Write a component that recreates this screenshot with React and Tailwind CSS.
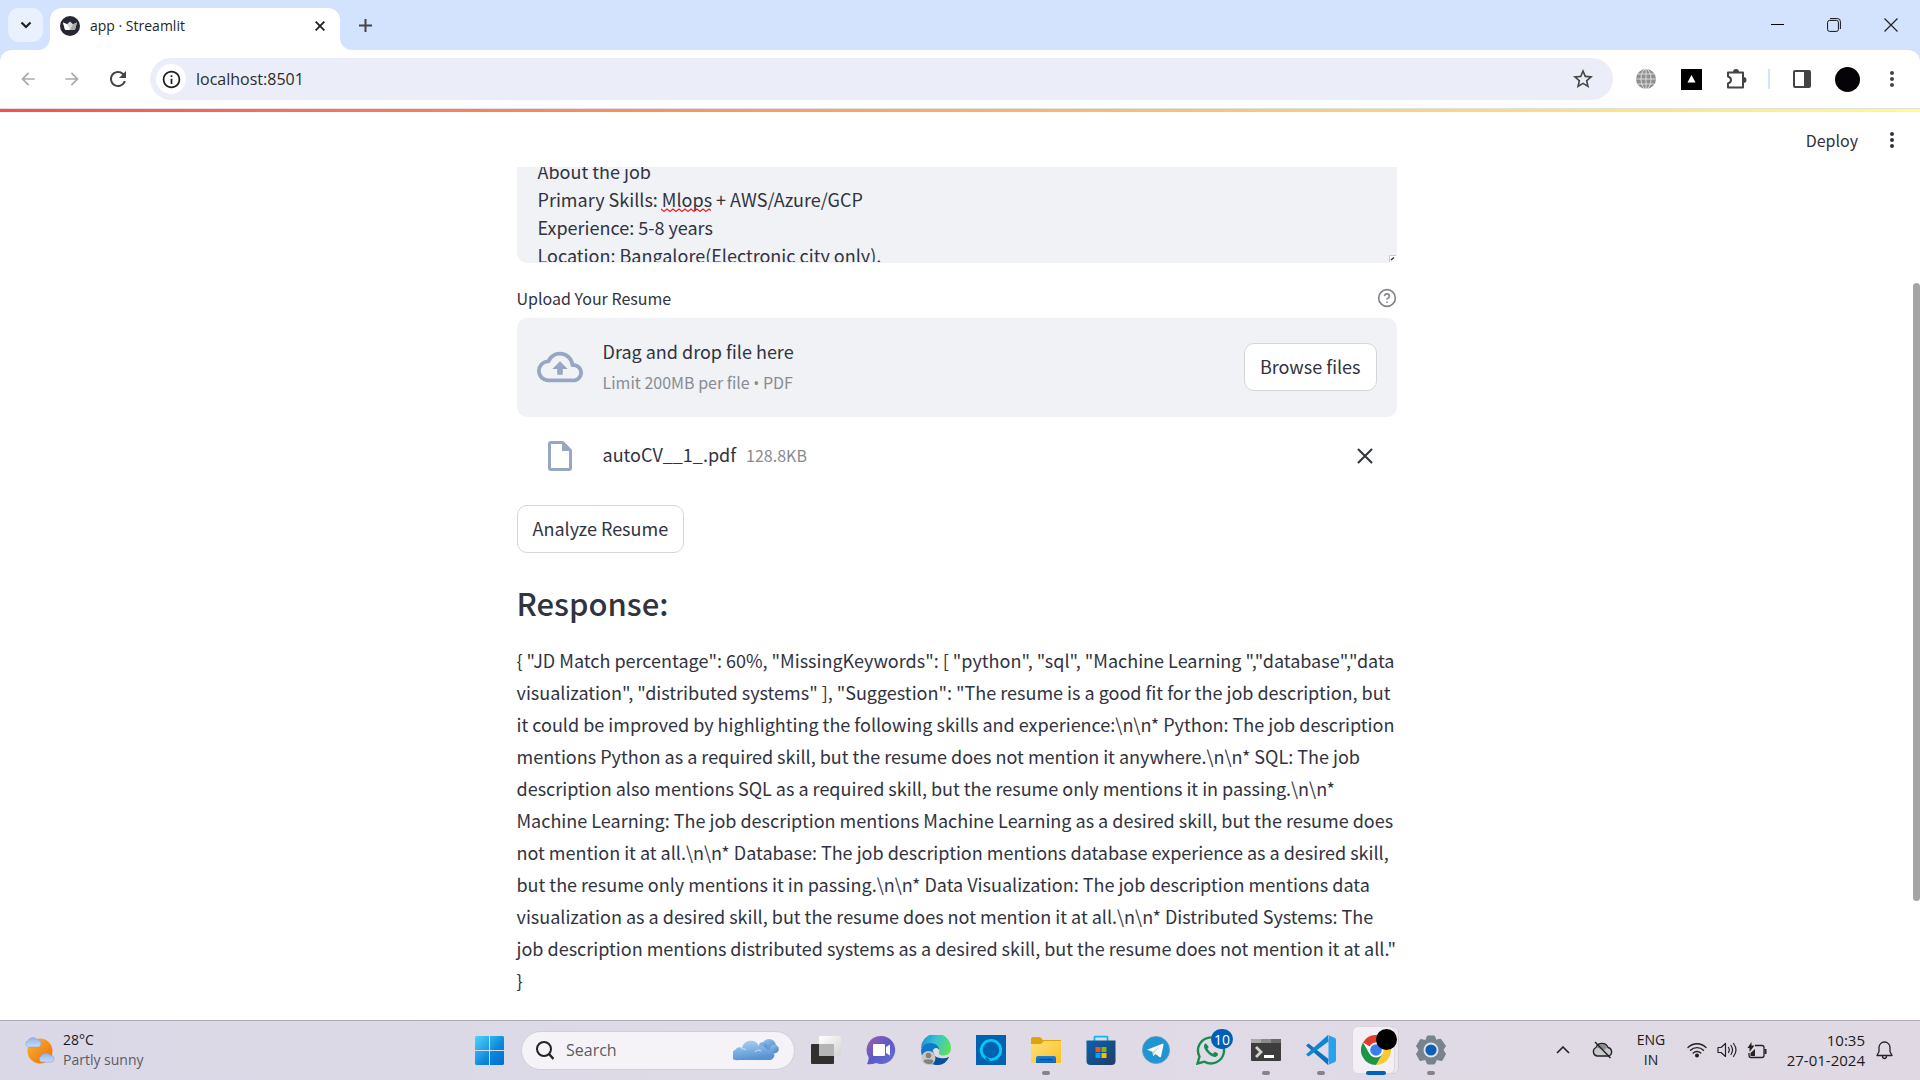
import React from "react";
import {
  MdOutlineCloudUpload,
  MdStarBorder,
  MdRefresh,
  MdArrowBack,
  MdArrowForward,
  MdOutlineInfo,
  MdMoreVert,
} from "react-icons/md";
import { CircleHelp } from "lucide-react";

const responseLines = [
  '{ "JD Match percentage": 60%, "MissingKeywords": [ "python", "sql", "Machine Learning ","database","data',
  'visualization", "distributed systems" ], "Suggestion": "The resume is a good fit for the job description, but',
  "it could be improved by highlighting the following skills and experience:\\n\\n* Python: The job description",
  "mentions Python as a required skill, but the resume does not mention it anywhere.\\n\\n* SQL: The job",
  "description also mentions SQL as a required skill, but the resume only mentions it in passing.\\n\\n*",
  "Machine Learning: The job description mentions Machine Learning as a desired skill, but the resume does",
  "not mention it at all.\\n\\n* Database: The job description mentions database experience as a desired skill,",
  "but the resume only mentions it in passing.\\n\\n* Data Visualization: The job description mentions data",
  "visualization as a desired skill, but the resume does not mention it at all.\\n\\n* Distributed Systems: The",
  'job description mentions distributed systems as a desired skill, but the resume does not mention it at all."',
  "}",
];

const jobText =
  "About the job\nPrimary Skills: Mlops + AWS/Azure/GCP\nExperience: 5-8 years\nLocation: Bangalore(Electronic city only).";

function StreamlitIcon() {
  return (
    <svg viewBox="0 0 20 20" className="size-5 shrink-0">
      <circle cx="10" cy="10" r="10" fill="#262730" />
      <path d="M3 6.500 7 8.200 10 5.500 13 8.200 17 6.500 15.200 13Q14.900 14 14 14H6Q5.100 14 4.800 13Z" fill="#d8d8d8" />
      <path d="M3 6.500 7 8.200 10 14H6Q5.100 14 4.800 13Z" fill="#fff" />
      <path d="M17 6.500 13 8.200 10 14H14Q14.900 14 15.200 13Z" fill="#a9a9a9" />
    </svg>
  );
}

function TabStrip() {
  return (
    <header className="flex h-[50px] items-end bg-[#d3e3fd]">
      <button aria-label="Search tabs" className="mb-2 ml-2 flex h-[34px] w-[35px] items-center justify-center rounded-[11px] bg-[#e9f1fe]">
        <svg viewBox="0 0 12 8" className="h-2 w-3" fill="none" stroke="#1f1f1f" strokeWidth="2.200">
          <path d="M1.500 1.500 6 6 10.500 1.500" />
        </svg>
      </button>
      <div className="relative ml-[7px] flex h-[42px] w-[290px] items-center rounded-t-xl bg-white pr-3 pb-[7px] pl-[10px]">
        <svg viewBox="0 0 12 12" className="absolute bottom-0 -left-3 size-3">
          <path d="M12 0V12H0A12 12 0 0 0 12 0Z" fill="#fff" />
        </svg>
        <svg viewBox="0 0 12 12" className="absolute -right-3 bottom-0 size-3">
          <path d="M0 0V12H12A12 12 0 0 1 0 0Z" fill="#fff" />
        </svg>
        <StreamlitIcon />
        <span className="ml-[10px] flex-1 text-[14px] text-[#1f1f1f]">app · Streamlit</span>
        <button aria-label="Close tab" className="flex size-4 items-center justify-center">
          <svg viewBox="0 0 10 10" className="size-[10px]" stroke="#1f1f1f" strokeWidth="1.8">
            <path d="M.6.6 9.4 9.4M9.4.6.6 9.4" />
          </svg>
        </button>
      </div>
      <button aria-label="New tab" className="mb-[18px] ml-[19px]">
        <svg viewBox="0 0 13 13" className="size-[13px]" stroke="#444" strokeWidth="2">
          <path d="M6.5 0V13M0 6.5H13" />
        </svg>
      </button>
      <div className="mb-[18px] ml-auto flex items-center gap-[43px] pr-[22px]">
        <button aria-label="Minimize">
          <svg viewBox="0 0 14 14" className="size-[14px]" stroke="#000">
            <path d="M1 6.500H14" />
          </svg>
        </button>
        <button aria-label="Restore">
          <svg viewBox="0 0 14 14" className="size-[14px]" fill="none" stroke="#111">
            <rect x=".6" y="2.4" width="10.8" height="11" rx="2" />
            <path d="M3 .6H10.5Q13.4 .6 13.4 3.5V11" />
          </svg>
        </button>
        <button aria-label="Close">
          <svg viewBox="0 0 14 14" className="size-[14px]" stroke="#222" strokeWidth="1.2">
            <path d="M.5.5 13.5 13.5M13.5.5.5 13.5" />
          </svg>
        </button>
      </div>
    </header>
  );
}

function Toolbar() {
  return (
    <div className="bg-[#d3e3fd]">
      <div className="flex h-[59px] items-center rounded-t-xl border-b border-[#dde1e8] bg-white">
        <div className="flex w-[150px] shrink-0 items-center gap-6 pl-[18px] text-[#aaa]">
          <button aria-label="Back"><MdArrowBack className="size-5" /></button>
          <button aria-label="Forward"><MdArrowForward className="size-5" /></button>
          <button aria-label="Reload"><MdRefresh className="size-6 text-[#444]" /></button>
        </div>
        <div className="flex h-[42px] flex-1 items-center rounded-full bg-[#ebeef8] px-[6px]">
          <button aria-label="Site information" className="flex size-[30px] items-center justify-center rounded-full bg-white text-[#1f1f1f]">
            <MdOutlineInfo className="size-[21px]" />
          </button>
          <input
            aria-label="Address"
            defaultValue="localhost:8501"
            className="ml-[10px] flex-1 bg-transparent text-[16px] text-[#2b2b2b] outline-none"
          />
          <button aria-label="Bookmark" className="pr-3 text-[#444]"><MdStarBorder className="size-6" /></button>
        </div>
        <div className="flex items-center pl-[23px] text-[#444]">
          <button aria-label="Web extension">
            <svg viewBox="0 0 20 20" className="size-5">
              <circle cx="10" cy="10" r="10" fill="#8f8f8f" />
              <g fill="none" stroke="#e4e4e4" strokeWidth=".9">
                <ellipse cx="10" cy="10" rx="5" ry="10" />
                <path d="M10 0V20M0 10H20M1.5 5H18.500M1.500 15H18.500" />
              </g>
            </svg>
          </button>
          <button aria-label="Triangle extension" className="ml-[25px]">
            <svg viewBox="0 0 21 21" className="size-[21px]">
              <path d="M0 0H21V21H0Z" fill="#000" />
              <path d="M10.500 6 14.500 13.500H6.500Z" fill="#fff" />
            </svg>
          </button>
          <button aria-label="Extensions" className="ml-[24px]">
            <svg viewBox="0 0 22 22" className="size-[22px]">
              <path d="M2 3.500H17V18.500H2V14.500Q5 13.600 5 11T2 7.500Z" transform="translate(0 1)" fill="none" stroke="#444" strokeWidth="2" strokeLinejoin="round" />
              <path d="M7 4A3 3 0 0 1 13 4ZM17.500 9A3 3 0 0 1 17.500 15Z" fill="#444" />
            </svg>
          </button>
          <span className="ml-[20px] h-5 w-[2px] bg-[#d3e3fd]" />
          <button aria-label="Side panel" className="ml-[23px]">
            <svg viewBox="0 0 18 18" className="size-[18px]">
              <rect x="1" y="1" width="16" height="16" rx="1" fill="none" stroke="#444" strokeWidth="2" />
              <path d="M11 1H17V17H11Z" fill="#444" />
            </svg>
          </button>
          <button aria-label="Profile" className="ml-6 size-[25px] rounded-full bg-[#050308]" />
          <button aria-label="Chrome menu" className="mr-4 ml-[20px]"><MdMoreVert className="size-6" /></button>
        </div>
      </div>
    </div>
  );
}

function Resume() {
  return (
    <main className="flex-1 overflow-hidden">
      <div className="mx-auto w-full max-w-[880px]">
        <div className="relative h-24 overflow-hidden rounded-b-[10px] bg-[#f0f2f6]">
          <textarea
            aria-label="Job description"
            spellCheck={false}
            defaultValue={jobText}
            className="-mt-[10px] block h-[105px] w-full resize-none overflow-hidden px-[21px] text-[18px] leading-7 outline-none"
          />
          <svg viewBox="0 0 50 4" className="absolute top-[41px] left-[144px] h-1 w-[50px]" fill="none" stroke="#f01818" strokeWidth="1.2">
            <path d="M0 1 3 3.400 6 1 9 3.400 12 1 15 3.400 18 1 21 3.400 24 1 27 3.400 30 1 33 3.400 36 1 39 3.400 42 1 45 3.400 48 1 50 2.500" />
          </svg>
          <svg viewBox="0 0 7 7" className="absolute right-px bottom-px size-[7px]">
            <path d="M0 0H7V4L4 7H0Z" fill="#fff" />
            <path d="M.5 7V.5H7" fill="none" stroke="#ccc" />
            <path d="M2 5 5 2.500" stroke="#333" strokeWidth="1.500" />
          </svg>
        </div>

        <div className="mt-[23px] flex h-6 items-center justify-between">
          <label htmlFor="resume" className="text-[16px] leading-6">Upload Your Resume</label>
          <button aria-label="Help" className="text-[#84858c]"><CircleHelp className="size-5" /></button>
        </div>

        <section className="mt-2 flex h-[99px] items-center rounded-[10px] bg-[#f0f2f6] px-5 pb-[2px]">
          <MdOutlineCloudUpload className="size-[46px] text-[#97a6c3]" />
          <div className="ml-5 flex-1">
            <p className="text-[18px] leading-8">Drag and drop file here</p>
            <p className="text-[16px] leading-[30px] text-[#8a8b91]">
              Limit 200MB per file <span className="font-['Open_Sans',sans-serif]">•</span> PDF
            </p>
          </div>
          <input id="resume" type="file" className="sr-only" />
          <button className="h-12 rounded-[10px] border border-[#d6d6d9] bg-white px-[15px] text-[18px]">Browse files</button>
        </section>

        <div className="mt-[19px] flex h-10 items-center pr-6 pl-[31px]">
          <svg viewBox="0 0 24 30" className="h-[30px] w-6">
            <path d="M3 1.500H14.500L22.500 9.500V27Q22.500 28.500 21 28.500H3Q1.500 28.500 1.500 27V3Q1.500 1.500 3 1.500Z" fill="none" stroke="#97a6c3" strokeWidth="3" />
            <path d="M14 1H16L23 8V10H14Z" fill="#97a6c3" />
          </svg>
          <span className="ml-[31px] pb-1 text-[18px]">autoCV__1_.pdf</span>
          <span className="ml-[10px] pb-[2px] text-[16px] text-[#8a8b91]">128.8KB</span>
          <button aria-label="Remove file" className="ml-auto">
            <svg viewBox="0 0 16 16" className="size-4" stroke="#31333f" strokeWidth="2" strokeLinecap="round">
              <path d="M1.500 1.500 14.500 14.500M14.500 1.500 1.500 14.500" />
            </svg>
          </button>
        </div>

        <button className="mt-[29px] h-12 rounded-[10px] border border-[#d6d6d9] px-[15px] pb-[2px] text-[18px]">Analyze Resume</button>
        <h2 className="mt-[26px] text-[31px] leading-[48px] font-medium">Response:</h2>
        <p className="mt-[17px] text-[18px] leading-8 whitespace-pre">{responseLines.join("\n")}</p>
      </div>
    </main>
  );
}

function Weather() {
  return (
    <svg viewBox="0 0 32 30" className="h-[30px] w-8">
      <defs>
        <linearGradient id="sun" x1="0" y1="0" x2="1" y2="1"><stop stopColor="#f8b62c" /><stop offset="1" stopColor="#f06a0c" /></linearGradient>
        <linearGradient id="wcloud" x1="0" y1="0" x2="0" y2="1"><stop stopColor="#8fb2ea" /><stop offset="1" stopColor="#c9dcf8" /></linearGradient>
      </defs>
      <circle cx="16" cy="16" r="12.500" fill="url(#sun)" />
      <path d="M4 12A3.500 3.500 0 0 1 4 5.500 5.500 5.500 0 0 1 13 4.500 4 4 0 0 1 15 12Z" fill="url(#wcloud)" stroke="#7fa3e0" strokeWidth=".6" />
      <path d="M17 27A3.500 3.500 0 0 1 17 21 5.500 5.500 0 0 1 26 20 3.700 3.700 0 0 1 28 27Z" fill="url(#wcloud)" stroke="#7fa3e0" strokeWidth=".6" />
    </svg>
  );
}

function StartIcon() {
  return (
    <svg viewBox="0 0 29 29" className="size-[29px]">
      <defs><linearGradient id="win" x1="0" y1="0" x2="1" y2="1"><stop stopColor="#4fd3fb" /><stop offset=".6" stopColor="#0c86dc" /><stop offset="1" stopColor="#006fd0" /></linearGradient></defs>
      <path d="M1 0H14V14H0V1ZM15 0H28L29 1V14H15ZM0 15H14V29H1L0 28ZM15 15H29V28L28 29H15Z" fill="url(#win)" />
    </svg>
  );
}

function SearchClouds() {
  return (
    <svg viewBox="0 0 46 22" className="h-[22px] w-[46px]">
      <defs>
        <linearGradient id="sc" x1="0" y1="0" x2=".3" y2="1"><stop stopColor="#b2d5f6" /><stop offset="1" stopColor="#5593d2" /></linearGradient>
        <linearGradient id="sc2" x1="0" y1="0" x2=".6" y2="1"><stop stopColor="#9cc6ef" /><stop offset="1" stopColor="#4c88c9" /></linearGradient>
      </defs>
      <circle cx="36" cy="7" r="7" fill="url(#sc2)" />
      <circle cx="41.500" cy="10" r="4.300" fill="url(#sc2)" />
      <circle cx="30" cy="7" r="4" fill="url(#sc2)" />
      <path d="M5 21A5 5 0 0 1 2 11 5 5 0 0 1 9 9 9 9 0 0 1 26 7 6 6 0 0 1 34 11 5 5 0 0 1 38 21Z" fill="url(#sc)" />
      <path d="M22 13A4 4 0 0 1 28 12M13 11A5 5 0 0 0 8 10" stroke="#b4d6f7" strokeWidth="1.200" fill="none" />
    </svg>
  );
}

const apps = [
  {
    name: "Task view",
    icon: (
      <svg viewBox="0 0 30 30" className="size-[30px]">
        <defs><linearGradient id="tv" x1="0" y1="0" x2="1" y2="1"><stop stopColor="#fff" /><stop offset="1" stopColor="#d5d5d5" /></linearGradient></defs>
        <rect y="9" width="23" height="20" rx="1" fill="#30302e" />
        <rect x="8" y="1" width="22" height="20" rx="1" fill="url(#tv)" />
        <path d="M8 9H23V21H8Z" fill="#b4b5b4" />
      </svg>
    ),
  },
  {
    name: "Chat",
    icon: (
      <svg viewBox="0 0 30 30" className="size-[30px]">
        <defs><linearGradient id="teams" x1="0" y1="0" x2="1" y2="1"><stop stopColor="#a45ca5" /><stop offset=".5" stopColor="#5b5ac8" /><stop offset="1" stopColor="#6672d8" /></linearGradient></defs>
        <path d="M15 1A14 14 0 1 1 10 28Q5 30 1 29 3 26 2.500 22A14 14 0 0 1 15 1Z" fill="url(#teams)" />
        <rect x="7" y="9" width="12" height="12" rx="1" fill="#fff" />
        <path d="M20 12 24 9.500V20.500L20 18Z" fill="#fff" />
      </svg>
    ),
  },
  {
    name: "Edge",
    icon: (
      <svg viewBox="0 0 30 30" className="size-[30px]">
        <defs>
          <linearGradient id="edgeTop" x1="0" y1=".3" x2="1" y2=".6"><stop stopColor="#1c91d5" /><stop offset=".45" stopColor="#35c4d6" /><stop offset="1" stopColor="#63df55" /></linearGradient>
        </defs>
        <path d="M0 14A15 15 0 0 1 30 13Q30 20 23 20.500 17 20.500 18 17C20 12 12 7 6 9Q2 10 0 14Z" fill="url(#edgeTop)" />
        <path d="M0 15Q2 8 9 8C16 8 19 13 18 15 15 10 9 16 12 21 16 28 23 26 28 22 24 29 17 31 12 29.500 4 28 0 22 0 15Z" fill="#0f78c8" />
        <path d="M12 15Q12 22 19 23 24 24 28 22 24 31 14 30 9 24 12 15Z" fill="#0d4f9b" />
        <circle cx="7.500" cy="23" r="7" fill="#cac7c5" />
        <circle cx="7.500" cy="20.500" r="2.800" fill="#85817f" />
        <path d="M2.500 26.500Q2.500 24.500 5 24.500H10Q12.500 24.500 12.500 26.500 10 30 7.500 29 5 29 2.500 26.500Z" fill="#85817f" />
      </svg>
    ),
  },
  {
    name: "Alexa",
    icon: (
      <svg viewBox="0 0 30 30" className="size-[30px]">
        <path d="M0 0H30V30H0Z" fill="#0063b1" />
        <circle cx="15" cy="15" r="9.700" fill="none" stroke="#06c8f8" strokeWidth="2.800" />
        <path d="M9 22.500Q13 22 14 26L10.500 25Z" fill="#0063b1" />
      </svg>
    ),
  },
  {
    name: "File Explorer",
    running: true,
    icon: (
      <svg viewBox="0 0 30 30" className="size-[30px]">
        <defs>
          <linearGradient id="fold" x1="0" y1="0" x2="1" y2="1"><stop stopColor="#ffe07c" /><stop offset="1" stopColor="#fdc020" /></linearGradient>
          <linearGradient id="foldb" x1="0" y1="0" x2="0" y2="1"><stop stopColor="#1a80d4" /><stop offset="1" stopColor="#0d66bc" /></linearGradient>
        </defs>
        <path d="M0 4Q0 2 2 2H9L12 5H29Q30 5 30 6V14H0Z" fill="#e0a10a" />
        <path d="M0 9H10L13 6H29Q30 6 30 7V28H1L0 27Z" fill="url(#fold)" />
        <path d="M5 28V23Q5 21 7 21H23Q25 21 25 23V28Z" fill="url(#foldb)" />
        <path d="M8.500 24.500H21.500" stroke="#0a4c91" strokeWidth="1.200" />
      </svg>
    ),
  },
  {
    name: "Microsoft Store",
    icon: (
      <svg viewBox="0 0 30 30" className="size-[30px]">
        <defs><linearGradient id="store" x1="0" y1="0" x2="1" y2="1"><stop stopColor="#0864ac" /><stop offset="1" stopColor="#233a68" /></linearGradient></defs>
        <path d="M8.500 8V2.200Q8.500 1.700 9 1.700H21Q21.500 1.700 21.500 2.200V8" fill="none" stroke="#18b4ee" strokeWidth="1.800" />
        <path d="M.5 5.500H29.500V26Q29.500 30 25.500 30H4.500Q.5 30 .5 26Z" fill="url(#store)" />
        <path d="M9.500 12H14.500V17H9.500Z" fill="#f25022" />
        <path d="M15.500 12H20.500V17H15.500Z" fill="#7fba00" />
        <path d="M9.500 18H14.500V23H9.500Z" fill="#00a4ef" />
        <path d="M15.500 18H20.500V23H15.500Z" fill="#ffb900" />
      </svg>
    ),
  },
  {
    name: "Telegram",
    icon: (
      <svg viewBox="0 0 28 28" className="size-7">
        <circle cx="14" cy="14" r="13.600" fill="#1f95d4" stroke="#6b9fc0" strokeWidth=".8" />
        <path d="M5 13.800 20.500 7.700Q21.800 7.300 21.500 8.800L19 20.500Q18.700 21.700 17.500 21L13.500 18 11.500 20Q11 20.300 11 19.500L10.500 15.800Z" fill="#fff" />
        <path d="M10.500 15.800 18 10.500 12.200 16.500 11.500 20Z" fill="#b9d8ec" />
      </svg>
    ),
  },
  {
    name: "WhatsApp",
    badge: "10",
    icon: (
      <svg viewBox="0 0 30 30" className="size-[30px]">
        <path d="M1.500 28.500 3.500 21.500A13 13 0 1 1 8.500 26.700Z" fill="none" stroke="#198a50" strokeWidth="2.400" />
        <path d="M10 8.500Q9 8.300 8.200 9.800 7.200 13 11 17.300 16 22.800 20 21.700 22.300 20.800 22 18.500L18.800 16.800 17 18.700Q13.200 17 11.500 13.700L12.700 12Z" fill="#198a50" />
      </svg>
    ),
  },
  {
    name: "Terminal",
    running: true,
    icon: (
      <svg viewBox="0 0 30 24" className="h-6 w-[30px]">
        <rect y="1" width="30" height="22" rx="1" fill="#3d3d3d" />
        <path d="M0 2Q0 1 1 1H10V5H0Z" fill="#aaa" />
        <path d="M10 1H20V5H10Z" fill="#8a8a8a" />
        <path d="M20 1H29Q30 1 30 2V5H20Z" fill="#696969" />
        <path d="M5 9 10 14 5 19" fill="none" stroke="#d0d0d0" strokeWidth="2.800" />
        <path d="M13 18.500H23" stroke="#fff" strokeWidth="3" />
      </svg>
    ),
  },
  {
    name: "Visual Studio Code",
    running: true,
    icon: (
      <svg viewBox="0 0 30 30" className="size-[30px]">
        <path d="M0 10.500 2.500 8.500 22.500 24 22 30Z" fill="#0a73bd" />
        <path d="M0 19.500 2.500 21.500 22.500 6.500 22 0Z" fill="#0f87cf" />
        <path d="M22 0 29 3Q30 3.500 30 5V25Q30 26.500 29 27L22 30Q23.500 28 22.500 26V4Q23.500 2 22 0Z" fill="#29a2ee" />
      </svg>
    ),
  },
  {
    name: "Google Chrome",
    active: true,
    icon: (
      <svg viewBox="0 0 30 30" className="size-[30px]">
        <circle cx="15" cy="15" r="15" fill="#fff" />
        <path d="M15 15 2 7.500A15 15 0 0 1 28 7.500H15Z" fill="#e33b2e" />
        <path d="M28 7.500A15 15 0 0 1 15 30L21.500 18.800 15 7.500Z" fill="#fcc934" />
        <path d="M15 30A15 15 0 0 1 2 7.500L8.500 18.800 21.500 18.800Z" fill="#1e9447" />
        <circle cx="15" cy="15" r="7.500" fill="#fff" />
        <circle cx="15" cy="15" r="5.800" fill="#3b7de9" />
      </svg>
    ),
  },
  {
    name: "Settings",
    running: true,
    icon: (
      <svg viewBox="0 0 30 30" className="size-[30px]">
        <path d="M11.500 1H18.500L19.800 5.300 24.500 4 29.500 11 27 15 29.500 19 26 25.500 20.500 24.500 18.500 29H11.500L9.500 24.500 4 25.500 .5 19 3 15 .5 11 4.500 4.500 9.700 5.500Z" fill="#77838d" stroke="#77838d" strokeLinejoin="round" />
        <circle cx="15" cy="15" r="7.500" fill="#dfe5ea" />
        <circle cx="15" cy="15" r="5.600" fill="#0d5fb4" />
      </svg>
    ),
  },
];

function AppButton({ app }) {
  return (
    <button aria-label={app.name} className="relative flex h-[58px] w-[55px] items-center justify-center">
      {app.active && (
        <>
          <span className="absolute top-[5px] left-[11px] h-12 w-[40px] rounded-md border border-[#d2ccd8] bg-[#ebe6ee]" />
          <span className="absolute top-[5px] left-1 h-12 w-[43px] rounded-md border border-[#dcd6e0] bg-[#f2eff5]" />
        </>
      )}
      <span className="relative">{app.icon}</span>
      {app.badge && (
        <span className="absolute top-2 right-[5px] flex h-5 w-[22px] items-center justify-center rounded-full bg-[#0060b8] text-[14px] text-white">
          {app.badge}
        </span>
      )}
      {app.active && <span className="absolute top-2 right-[6px] size-[21px] rounded-full bg-black" />}
      {app.active && <span className="absolute bottom-1 h-1 w-5 rounded-full bg-[#0061b4]" />}
      {app.running && <span className="absolute bottom-1 h-1 w-2 rounded-full bg-[#85828c]" />}
    </button>
  );
}

function Taskbar() {
  return (
    <footer className="grid h-[60px] grid-cols-[1fr_auto_1fr] border-t border-[#afacb4] bg-linear-to-r from-[#dad8e7] via-[#dfdbe6] to-[#e0d9e4] pb-px text-[#1b1b1b]">
      <button className="flex items-center gap-[7px] pl-6 text-left text-[14px] leading-5">
        <Weather />
        <span>
          <span className="block">28°C</span>
          <span className="block text-[#5c5a62]">Partly sunny</span>
        </span>
      </button>
      <nav aria-label="Taskbar apps" className="flex items-center">
        <button aria-label="Start" className="flex w-[55px] justify-center"><StartIcon /></button>
        <label className="mr-[3px] ml-1 flex h-[39px] w-[274px] items-center rounded-full border border-[#d2cfd8] bg-[#f5f3f7] pr-[15px] pl-[14px]">
          <svg viewBox="0 0 18 19" className="h-[19px] w-[18px] shrink-0" fill="none" stroke="#222" strokeWidth="2">
            <circle cx="8" cy="8" r="7" />
            <path d="M13 13 17.500 18" strokeWidth="2.400" />
          </svg>
          <input aria-label="Search" placeholder="Search" className="ml-3 w-0 flex-1 bg-transparent text-[16px] outline-none placeholder:text-[#5d5b61]" />
          <SearchClouds />
        </label>
        {apps.map((app) => <AppButton key={app.name} app={app} />)}
      </nav>
      <div className="flex items-center justify-end pr-[27px] text-[14px] leading-5">
        <button aria-label="Hidden icons">
          <svg viewBox="0 0 14 8" className="h-2 w-[14px]" fill="none" stroke="#222" strokeWidth="1.600"><path d="M1 7 7 1 13 7" /></svg>
        </button>
        <button aria-label="OneDrive" className="ml-[22px]">
          <svg viewBox="0 0 21 18" className="h-[18px] w-[21px]">
            <path d="M5 15A4.500 4.500 0 0 1 4 6.500 6.500 6.500 0 0 1 16 6.500 4.500 4.500 0 0 1 17 15Z" fill="#c9c8cb" stroke="#222" strokeWidth="1.300" />
            <path d="M4.500 6.500A6 6 0 0 1 15.500 6.500L12 9Z" fill="#8d8c90" />
            <path d="M3 1 18.500 17" stroke="#222" strokeWidth="1.500" />
          </svg>
        </button>
        <button aria-label="Input language" className="ml-[22px] w-8 text-center"><span className="block">ENG</span><span className="block">IN</span></button>
        <button aria-label="Network, sound and battery" className="ml-[20px] flex items-center gap-[10px]">
          <svg viewBox="0 0 20 16" className="h-4 w-5" fill="none" stroke="#222" strokeWidth="1.400" strokeLinecap="round">
            <path d="M1 5.500A12.700 12.700 0 0 1 19 5.500M3.500 8.300A9.200 9.200 0 0 1 16.500 8.300M6.200 11A5.400 5.400 0 0 1 13.800 11" />
            <circle cx="10" cy="13.500" r="1.300" fill="#222" />
          </svg>
          <svg viewBox="0 0 20 16" className="h-4 w-5" fill="none" stroke="#222" strokeWidth="1.200" strokeLinecap="round" strokeLinejoin="round">
            <path d="M1 5.500H4L8.500 1.500V14.500L4 10.500H1ZM11.500 5.500Q13 8 11.500 10.500M14 3.500Q17 8 14 12.500M16.500 1.500Q21.500 8 16.500 14.500" />
          </svg>
          <svg viewBox="0 0 20 17" className="h-[17px] w-5">
            <path d="M8 3.500H15Q17 3.500 17 5.500V13.500Q17 15.500 15 15.500H4Q2 15.500 2 13.500V11" fill="none" stroke="#222" strokeWidth="1.300" />
            <path d="M4.500 0V3.500H7.500L2.500 10V6H.5ZM17.500 7H19.500V12H17.500ZM3.500 11 8 7V14H3.500Z" fill="#222" />
          </svg>
        </button>
        <button className="ml-[18px] w-[80px] text-right text-[15px] leading-5 whitespace-nowrap"><span className="block">10:35</span><span className="block">27-01-2024</span></button>
        <button aria-label="Notifications" className="ml-[11px]">
          <svg viewBox="0 0 17 19" className="h-[19px] w-[17px]" fill="none" stroke="#222" strokeWidth="1.300" strokeLinejoin="round">
            <path d="M1 14.500 3 10.500V6.500A5.500 5.500 0 0 1 14 6.500V10.500L16 14.500ZM6.500 15Q6.500 17.500 8.500 17.500T10.500 15" />
          </svg>
        </button>
      </div>
    </footer>
  );
}

export default function App() {
  return (
    <div className="flex h-screen flex-col bg-white font-['Open_Sans','Noto_Sans',sans-serif]">
      <TabStrip />
      <Toolbar />
      <div className="h-[3px] shrink-0 bg-linear-to-r from-[#ff4b4b] to-[#fffd80]" />
      <div className="flex min-h-0 flex-1 font-['Noto_Sans_CJK_SC',sans-serif] text-[#31333f]">
        <div className="flex min-w-0 flex-1 flex-col">
          <div className="flex h-[55px] shrink-0 items-center justify-end gap-[22px] pr-[9px]">
            <button className="text-[16px]">Deploy</button>
            <button aria-label="App menu"><MdMoreVert className="size-6" /></button>
          </div>
          <Resume />
        </div>
        <div className="w-[7px] shrink-0 pt-[171px]">
          <div className="h-[618px] rounded-full bg-[#a5a5a8]" />
        </div>
      </div>
      <Taskbar />
    </div>
  );
}
